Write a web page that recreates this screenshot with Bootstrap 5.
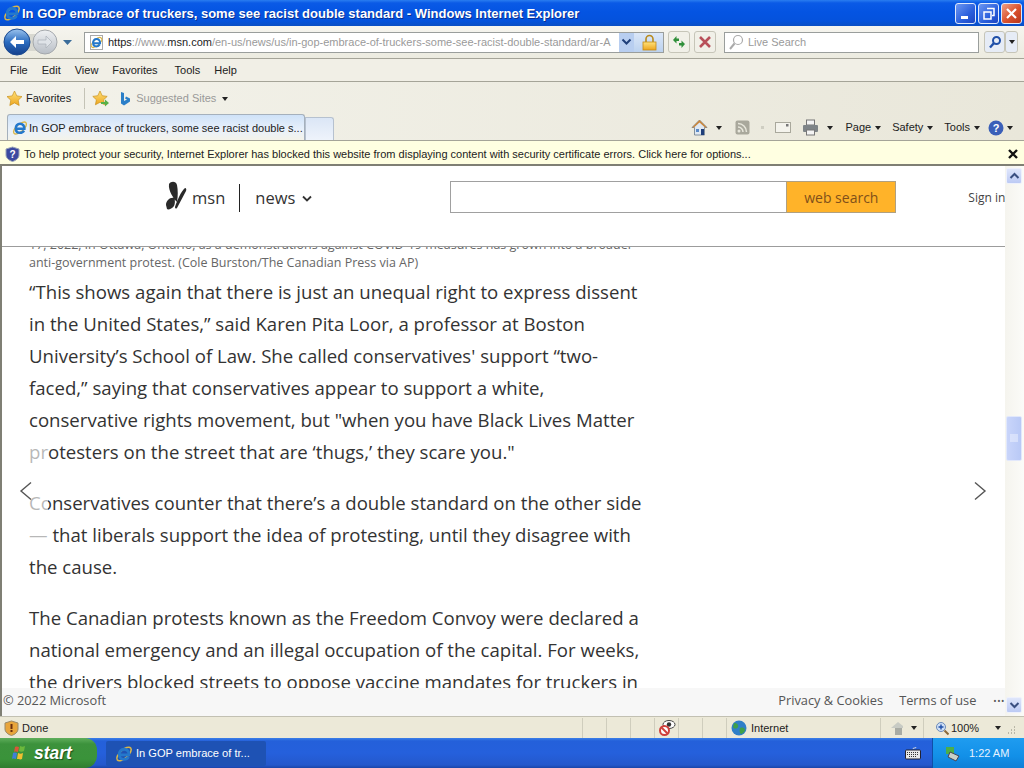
<!DOCTYPE html>
<html lang="en">
<head>
<meta charset="UTF-8">
<title>In GOP embrace of truckers, some see racist double standard - Windows Internet Explorer</title>
<link href="https://cdn.jsdelivr.net/npm/bootstrap@5.3.0/dist/css/bootstrap.min.css" rel="stylesheet">
<style>
html, body { margin: 0; height: 768px; overflow: hidden; }
body { font-family: "Liberation Sans", "Noto Sans", sans-serif; font-size: 11px; color: #222; width: 1024px; background: #ece9d8; }
body > div { flex: none; }
svg { display: block; flex: none; }
.ie-title { height: 26px; color: #fff; background: linear-gradient(#2a7df0 0, #0a5ae6 3px, #0454e2 12px, #0452dc 21px, #0a4fc4 26px); padding-left: 3px; }
.ie-title-text { font: bold 13px "Liberation Sans", sans-serif; margin-left: 1px; text-shadow: 1px 1px 0 #0a2f90; white-space: nowrap; width: 933px; flex: none; }
.ie-winbtn { width: 21px; height: 21px; margin-right: 2px; border: 1px solid #dfe9fb; border-radius: 3px; background: linear-gradient(135deg, #6c97f2, #2a5fdc 60%, #1c45c2); }
.ie-winbtn-close { background: linear-gradient(135deg, #f0a085, #d9512c 55%, #b8361a); }
.ie-addr { height: 33px; background: linear-gradient(#f6f5ef, #ecebe0); border-bottom: 1px solid #a5a498; }
.ie-urlbox { margin-left: 6px; width: 580px; height: 21px; background: #fff; border: 1px solid #9a9e9c; color: #9a9a9a; white-space: nowrap; overflow: hidden; }
.ie-url-text { width: 514px; flex: none; overflow: hidden; padding-left: 3px; }
.ie-url-text b { font-weight: 400; color: #222; }
.ie-urldrop { width: 15px; height: 100%; background: #b8cef0; flex: none; }
.ie-lock { width: 30px; height: 100%; background: linear-gradient(#dbe7f8, #bcd2ef); flex: none; }
.ie-toolbtn { width: 22px; height: 22px; border: 1px solid #c6c5b8; border-radius: 3px; background: #f1f0e8; }
.ie-search { margin-left: 8px; width: 255px; height: 21px; background: #fff; border: 1px solid #9a9e9c; color: #9a9a9a; padding-left: 3px; }
.ie-menu { height: 23px; background: #f1efe6; border-bottom: 1px solid #a5a498; padding-top: 1px; }
.ie-cmd { height: 59px; background: linear-gradient(90deg, #f3f2ea, #e9e7da); border-bottom: 1px solid #a5a498; }
.ie-favs { height: 33px; }
.ie-sep { width: 1px; height: 21px; background: #c4c3b6; }
.ie-muted { color: #999; }
.ie-caret { width: 0; height: 0; border: 3px solid transparent; border-top: 4px solid #222; border-bottom: 0; flex: none; }
.ie-tabrow { height: 25px; }
.ie-tab { width: 298px; height: 26px; margin-left: 7px; background: linear-gradient(#cfe2f8, #e9f1fb 60%, #f4f3ea); border: 1px solid #a5b0bc; border-bottom: 0; border-radius: 3px 3px 0 0; white-space: nowrap; padding: 1px 0 0 4px; align-self: flex-end; overflow: hidden; }
.ie-newtab { width: 29px; height: 23px; background: linear-gradient(#dbe6f6, #eef3fb); border: 1px solid #b6c1cf; border-bottom: 0; border-radius: 0 3px 0 0; align-self: flex-end; }
.ie-info { height: 25px; background: #ffffe1; border-bottom: 2px solid #7f7f74; padding: 3px 0 0 5px; white-space: nowrap; }
.ie-page { height: 550px; position: relative; background: #fff; border-left: 2px solid #7f7f74; }
.ie-pagemain { width: 1003px; flex: none; min-width: 0; }
.msn-head { height: 81px; border-bottom: 1px solid #9c9c9c; flex: none; padding: 15px 0 0 164px; font-family: "Open Sans", sans-serif; color: #333; white-space: nowrap; overflow: hidden; }
.msn-word { font-size: 16.5px; line-height: 34px; }
.msn-divider { width: 1px; height: 28px; background: #222; margin: 3px 15px 0 14px; flex: none; }
.msn-input { width: 336px; height: 32px; border: 1px solid #a0a0a0; border-right: 0; margin-left: 138px; background: #fff; flex: none; }
.msn-btn { width: 110px; height: 32px; background: #ffb329; border: 1px solid #b0a080; color: #80501a; font-size: 14px; flex: none; }
.msn-sign { font-size: 12px; margin-left: 72px; color: #444; line-height: 34px; }
.msn-article { flex: 1 1 auto; overflow: hidden; padding-left: 27px; white-space: nowrap; font-family: "Open Sans", sans-serif; }
.msn-caption { font-size: 12.5px; line-height: 18px; color: #666; margin: -11px 0 4px; }
.msn-para { font-size: 18.6px; line-height: 32px; color: #333; margin: 0 0 19px; }
.msn-foot { height: 28px; flex: none; background: #f7f7f7; color: #555; font-family: "Open Sans", sans-serif; font-size: 12.8px; padding: 0 0 2px 1px; }
.msn-fade { position: absolute; left: 0; top: 275px; width: 46px; height: 105px; background: rgba(255,255,255,.65); }
.msn-arrow { position: absolute; top: 315px; }
.ie-scroll { width: 19px; flex: none; background: linear-gradient(90deg, #f5f4ee, #fbfbf8); padding: 2px 2px 3px 1px; }
.ie-scrollbtn { height: 16px; background: linear-gradient(#dfe6fb, #bccaf4); border: 1px solid #eef1fc; border-radius: 2px; flex: none; }
.ie-thumb { height: 45px; margin-top: 232px; background: linear-gradient(90deg, #c9d5fa, #b9c9f6); border: 1px solid #e2e8fb; border-radius: 2px; flex: none; }
.ie-status { height: 22px; background: #ece9d8; padding: 1px 0 0 4px; border-top: 1px solid #c2c0b2; }
.ie-statcell { width: 24px; height: 100%; border-left: 1px solid #cfcdbd; flex: none; }
.ie-task { height: 30px; background: linear-gradient(#3a7fe8 0, #2460da 3px, #2560dc 50%, #2458cc 90%, #1a45a8 100%); color: #fff; }
.ie-start { width: 97px; height: 100%; background: linear-gradient(#5fae5c 0, #3c923c 20%, #3a933a 70%, #2f7d2f 100%); border-radius: 0 12px 12px 0; padding-left: 10px; font: italic bold 17.5px "Liberation Sans", sans-serif; text-shadow: 1px 1px 1px #1a4f1a; }
.ie-taskbtn { width: 160px; height: 25px; margin-left: 9px; background: #1e52b4; border-radius: 2px; font-size: 11.1px; padding: 1px 0 0 9px; white-space: nowrap; }
.ie-tray { width: 92px; height: 100%; background: linear-gradient(#1f9cf0, #1290e8 60%, #0f7fd6); border-left: 1px solid #0f4fa8; color: #e6f2ff; padding-left: 12px; }
</style>
</head>
<body class="d-flex flex-column">

<svg width="0" height="0" style="position:absolute">
  <defs>
    <linearGradient id="gBack" x1="0" y1="0" x2="0" y2="1"><stop offset="0" stop-color="#9cc4ee"/><stop offset=".5" stop-color="#2a6cc0"/><stop offset="1" stop-color="#14408c"/></linearGradient>
    <linearGradient id="gFwd" x1="0" y1="0" x2="0" y2="1"><stop offset="0" stop-color="#eef0f2"/><stop offset="1" stop-color="#b8bec6"/></linearGradient>
    <linearGradient id="gGold" x1="0" y1="0" x2="0" y2="1"><stop offset="0" stop-color="#ffe27a"/><stop offset="1" stop-color="#eda51e"/></linearGradient>
    <symbol id="ieLogo" viewBox="0 0 16 16">
      <ellipse cx="8" cy="8" rx="8" ry="3.600" transform="rotate(-42 8 8)" fill="none" stroke="#d9b64a" stroke-width="1.400"/>
      <path d="M3.800 8.800H12.400C12.600 5.600 10.600 3.800 8 3.800 5.400 3.800 3.800 5.800 3.800 8.400 3.800 11 5.500 12.800 8 12.800 9.800 12.800 11.200 12 12 10.600" fill="none" stroke="#2478cc" stroke-width="2.500"/>
    </symbol>
  </defs>
</svg>

<!-- title bar -->
<div class="ie-title d-flex align-items-center">
  <svg width="18" height="18"><use href="#ieLogo"/></svg>
  <div class="ie-title-text">In GOP embrace of truckers, some see racist double standard - Windows Internet Explorer</div>
  <div class="ie-winbtn d-flex align-items-end"><svg width="19" height="19"><rect x="5" y="12" width="7" height="3" fill="#fff"/></svg></div>
  <div class="ie-winbtn"><svg width="19" height="19"><path d="M8 4.500h7v7h-2M5 8h7v7H5z" fill="none" stroke="#fff" stroke-width="1.500"/></svg></div>
  <div class="ie-winbtn ie-winbtn-close"><svg width="19" height="19"><path d="M5 5l9 9M14 5l-9 9" stroke="#fff" stroke-width="2.200"/></svg></div>
</div>

<!-- address row -->
<div class="ie-addr d-flex align-items-center">
  <svg width="78" height="32">
    <rect x="14" y="8" width="36" height="17" rx="8" fill="#d8d8d0"/>
    <circle cx="17" cy="16" r="13" fill="url(#gBack)" stroke="#1b4a90"/>
    <path d="M10 16l6-6v4h8v4h-8v4z" fill="#fff"/>
    <circle cx="45" cy="16" r="12" fill="url(#gFwd)" stroke="#a4a8ac"/>
    <path d="M52 16l-6-6v4h-8v4h8v4z" fill="#dfe3e8" stroke="#aab0b8" stroke-width=".7"/>
    <path d="M63 14h9l-4.500 5z" fill="#3a6c9a"/>
  </svg>
  <div class="ie-urlbox d-flex align-items-center">
    <svg width="17" height="17" style="margin-left:3px"><rect x="2.500" y="1.500" width="12" height="14" fill="#fff" stroke="#aaa"/><use href="#ieLogo" x="2" y="2" width="13" height="13"/></svg>
    <div class="ie-url-text"><b>https</b>://www.<b>msn.com</b>/en-us/news/us/in-gop-embrace-of-truckers-some-see-racist-double-standard/ar-A</div>
    <div class="ie-urldrop d-flex align-items-center justify-content-center"><svg width="11" height="8"><path d="M1.500 1.500l4 4 4-4" fill="none" stroke="#1f3f7a" stroke-width="2"/></svg></div>
    <div class="ie-lock d-flex align-items-center justify-content-center"><svg width="15" height="17"><path d="M4 8V5a3.500 3.500 0 0 1 7 0v3" fill="none" stroke="#b88a1c" stroke-width="1.600"/><rect x="1" y="8" width="13" height="8" fill="url(#gGold)" stroke="#c48a18" stroke-width=".8"/></svg></div>
  </div>
  <div class="ie-toolbtn ms-1 d-flex align-items-center justify-content-center"><svg width="16" height="16"><path d="M2 6l3.500-4v2.500H8V7H5.500v2.500z" fill="#2f8f3a"/><path d="M14 10l-3.500 4v-2.500H8V9h2.500V6.500z" fill="#2f8f3a"/></svg></div>
  <div class="ie-toolbtn ms-1 d-flex align-items-center justify-content-center"><svg width="14" height="14"><path d="M2 2l10 10M12 2L2 12" stroke="#b8505a" stroke-width="2.600"/></svg></div>
  <div class="ie-search d-flex align-items-center gap-1">
    <svg width="16" height="18"><circle cx="10" cy="7" r="4.500" fill="#fff" stroke="#aaa" stroke-width="1.200"/><path d="M6.500 10.500L2 16" stroke="#aaa" stroke-width="2"/></svg>
    <span>Live Search</span>
  </div>
  <div class="ie-toolbtn d-flex align-items-center justify-content-center" style="margin-left:5px;width:21px;background:#e6ecf6"><svg width="14" height="14"><circle cx="8.500" cy="5.500" r="3.500" fill="none" stroke="#1f4fa8" stroke-width="2"/><path d="M6 8l-4 4.500" stroke="#1f4fa8" stroke-width="2.400"/></svg></div>
  <div class="ie-toolbtn d-flex align-items-center justify-content-center" style="width:13px;background:#e6ecf6"><span class="ie-caret"></span></div>
</div>

<!-- menu -->
<div class="ie-menu d-flex align-items-center">
  <span style="margin-left:10px">File</span>
  <span style="margin-left:14px">Edit</span>
  <span style="margin-left:14px">View</span>
  <span style="margin-left:14px">Favorites</span>
  <span style="margin-left:17px">Tools</span>
  <span style="margin-left:14px">Help</span>
</div>

<!-- favorites and tab row -->
<div class="ie-cmd d-flex flex-column">
  <div class="ie-favs d-flex align-items-center">
    <svg width="17" height="17" style="margin-left:6px"><path d="M8.500 1l2.300 4.900 5.200.7-3.800 3.600 1 5.300-4.700-2.600-4.700 2.600 1-5.300L1 6.600l5.200-.7z" fill="url(#gGold)" stroke="#c8901c" stroke-width=".7"/></svg>
    <span style="margin-left:3px">Favorites</span>
    <span class="ie-sep" style="margin-left:13px"></span>
    <svg width="18" height="17" style="margin-left:7px"><path d="M8 1l2.200 4.700 5 .7-3.600 3.400 1 5-4.600-2.500-4.600 2.500 1-5L.800 6.400l5-.7z" fill="url(#gGold)" stroke="#c8901c" stroke-width=".7"/><path d="M9 12h4v-2.500l4 3.500-4 3.500V14H9z" fill="#58b048"/></svg>
    <svg width="12" height="16" style="margin-left:9px"><path d="M2 1l3 1v8l3-1.500-2-1 1-2 4 2v3l-6 4-3-2z" fill="#2b7fc8"/></svg>
    <span class="ie-muted" style="margin-left:5px">Suggested Sites</span>
    <span class="ie-caret" style="margin-left:6px"></span>
  </div>
  <div class="ie-tabrow d-flex">
    <div class="ie-tab d-flex align-items-center">
      <svg width="16" height="16"><use href="#ieLogo"/></svg>
      <span style="margin-left:1px">In GOP embrace of truckers, some see racist double s...</span>
    </div>
    <div class="ie-newtab"></div>
    <div class="d-flex align-items-center ms-auto" style="padding-right:11px;height:25px">
      <svg width="17" height="17"><path d="M8.500 1L1 8.500h2.500V16h10V8.500H16z" fill="#dfe8f2" stroke="#6a7a8a" stroke-width=".8"/><path d="M8.500 1L1 8.500h2L8.500 3.500 14 8.500h2z" fill="#c8863c"/><rect x="10" y="10" width="3" height="6" fill="#1f3f7a"/><rect x="5" y="10" width="3" height="3" fill="#5a8ac8"/></svg>
      <span class="ie-caret" style="margin-left:8px"></span>
      <svg width="15" height="15" style="margin-left:13px"><rect width="14" height="14" x=".5" y=".5" rx="2" fill="#a9a89c"/><circle cx="4" cy="11" r="1.500" fill="#e8e7dc"/><path d="M3 7a5 5 0 0 1 5 5M3 3.500A8.500 8.500 0 0 1 11.500 12" fill="none" stroke="#e8e7dc" stroke-width="1.500"/></svg>
      <span style="margin-left:11px;width:3px;height:3px;background:#cfcec2"></span>
      <svg width="16" height="11" style="margin-left:11px"><rect x=".5" y=".5" width="15" height="10" fill="#f4f3ec" stroke="#a9a89c"/><rect x="11" y="2" width="2.500" height="2.500" fill="#777"/></svg>
      <svg width="17" height="17" style="margin-left:11px"><rect x="4.500" y="1" width="8" height="5" fill="#f4f4f4" stroke="#777"/><rect x="1" y="6" width="15" height="7" rx="1" fill="#7e8488"/><rect x="4.500" y="11" width="8" height="5" fill="#f4f4f4" stroke="#777"/></svg>
      <span class="ie-caret" style="margin-left:8px"></span>
      <span style="margin-left:12px">Page</span><span class="ie-caret ms-1"></span>
      <span style="margin-left:11px">Safety</span><span class="ie-caret ms-1"></span>
      <span style="margin-left:11px">Tools</span><span class="ie-caret ms-1"></span>
      <svg width="16" height="16" style="margin-left:8px"><circle cx="8" cy="8" r="7.500" fill="#3a5fb8"/><text x="8" y="12" text-anchor="middle" fill="#fff" font-family="Liberation Sans" font-weight="700" font-size="11">?</text></svg>
      <span class="ie-caret" style="margin-left:3px"></span>
    </div>
  </div>
</div>

<!-- information bar -->
<div class="ie-info d-flex align-items-center">
  <svg width="15" height="16"><path d="M7.500 1L14 3v6c0 3-3 5.500-6.500 6.500C4 14.500 1 12 1 9V3z" fill="#3c4aa0" stroke="#9aa4b8"/><text x="7.500" y="12" text-anchor="middle" fill="#fff" font-family="Liberation Sans" font-weight="700" font-size="10">?</text></svg>
  <span style="margin-left:4px">To help protect your security, Internet Explorer has blocked this website from displaying content with security certificate errors. Click here for options...</span>
  <svg width="10" height="10" class="ms-auto" style="margin-right:6px"><path d="M1 1l8 8M9 1L1 9" stroke="#111" stroke-width="2.400"/></svg>
</div>

<!-- page -->
<div class="ie-page d-flex">
  <div class="ie-pagemain d-flex flex-column">
    <div class="msn-head d-flex align-items-start">
      <svg width="22" height="30"><path d="M3 3C5 0 10 0 11 4 12 9 12 15 11 21 8 18 2 10 3 3zM19 7C20.500 7 20.500 9 20 10L11 27C10 28 9 27.500 9 26 11 20 15 10 19 7zM0 24C0 20 4 16 8 17 9.500 19 9 23 8 25 6 28 2 29 1 28z" fill="#2a2a2a"/></svg>
      <span class="msn-word" style="margin-left:4px">msn</span>
      <span class="msn-divider"></span>
      <span class="msn-word">news</span>
      <svg width="10" height="8" style="margin:14px 0 0 7px"><path d="M1 1.500l4 4 4-4" fill="none" stroke="#333" stroke-width="1.800"/></svg>
      <div class="msn-input"></div>
      <div class="msn-btn d-flex align-items-center justify-content-center">web search</div>
      <span class="msn-sign">Sign in</span>
    </div>
    <div class="msn-article">
      <p class="msn-caption">17, 2022, in Ottawa, Ontario, as a demonstrations against COVID-19 measures has grown into a broader<br>anti-government protest. (Cole Burston/The Canadian Press via AP)</p>
      <p class="msn-para">“This shows again that there is just an unequal right to express dissent<br>in the United States,” said Karen Pita Loor, a professor at Boston<br>University’s School of Law. She called conservatives' support “two-<br>faced,” saying that conservatives appear to support a white,<br>conservative rights movement, but "when you have Black Lives Matter<br>protesters on the street that are ‘thugs,’ they scare you."</p>
      <p class="msn-para">Conservatives counter that there’s a double standard on the other side<br>— that liberals support the idea of protesting, until they disagree with<br>the cause.</p>
      <p class="msn-para">The Canadian protests known as the Freedom Convoy were declared a<br>national emergency and an illegal occupation of the capital. For weeks,<br>the drivers blocked streets to oppose vaccine mandates for truckers in</p>
    </div>
    <div class="msn-foot d-flex align-items-center">
      <span>© 2022 Microsoft</span>
      <span class="ms-auto">Privacy &amp; Cookies</span>
      <span style="margin-left:16px">Terms of use</span>
      <span style="margin-left:17px;font-size:9px;letter-spacing:.5px">•••</span>
    </div>
  </div>
  <div class="msn-fade"></div>
  <svg class="msn-arrow" style="left:17px" width="14" height="20"><path d="M12 1.500L2 10l10 8.500" fill="none" stroke="#555" stroke-width="1.400"/></svg>
  <svg class="msn-arrow" style="left:971px" width="14" height="20"><path d="M2 1.500L12 10 2 18.500" fill="none" stroke="#555" stroke-width="1.400"/></svg>
  <div class="ie-scroll d-flex flex-column">
    <div class="ie-scrollbtn d-flex align-items-center justify-content-center"><svg width="11" height="8"><path d="M1.500 6l4-4 4 4" fill="none" stroke="#3a4f80" stroke-width="2"/></svg></div>
    <div class="ie-thumb d-flex align-items-center justify-content-center"><svg width="8" height="9"><path d="M0 1h8M0 3h8M0 5h8M0 7h8" stroke="#eef2fe"/></svg></div>
    <div class="ie-scrollbtn d-flex align-items-center justify-content-center mt-auto"><svg width="11" height="8"><path d="M1.500 2l4 4 4-4" fill="none" stroke="#3a4f80" stroke-width="2"/></svg></div>
  </div>
</div>

<!-- status bar -->
<div class="ie-status d-flex align-items-center">
  <svg width="15" height="16"><path d="M7.500 1L14 3v6c0 3-3 5.500-6.500 6.500C4 14.500 1 12 1 9V3z" fill="#e8a53c" stroke="#9a8a6a"/><rect x="6.500" y="4" width="2" height="5" fill="#6a2f10"/><rect x="6.500" y="10" width="2" height="2" fill="#6a2f10"/></svg>
  <span style="margin-left:3px;width:560px;flex:none">Done</span>
  <div class="ie-statcell"></div>
  <div class="ie-statcell"></div>
  <div class="ie-statcell"></div>
  <div class="ie-statcell d-flex align-items-center justify-content-center"><svg width="18" height="18"><ellipse cx="11" cy="5.500" rx="6" ry="4" fill="#fff" stroke="#444"/><circle cx="11" cy="5.500" r="2.200" fill="#333"/><circle cx="6.500" cy="11.500" r="4.500" fill="#fff" stroke="#d0403c" stroke-width="2"/><path d="M3.500 8.500l6 6" stroke="#d0403c" stroke-width="2"/></svg></div>
  <div class="ie-statcell"></div>
  <div class="ie-statcell"></div>
  <div class="ie-statcell d-flex align-items-center" style="width:154px;padding-left:4px">
    <svg width="16" height="16"><circle cx="8" cy="8" r="7.500" fill="#2f7fc8"/><path d="M3 3c3 0 5 2 4 4S3 9 2 7zM9 8c3-1 5 0 5 2s-3 4-4 4-2-4-1-6z" fill="#3fa04a"/></svg>
    <span style="margin-left:4px">Internet</span>
  </div>
  <div class="ie-statcell d-flex align-items-center" style="width:43px;padding-left:9px">
    <svg width="16" height="16"><path d="M1 8l7-6 5 4v2z" fill="#c8cbc4"/><rect x="5" y="8" width="7" height="7" fill="#a8aba4"/></svg>
    <span class="ie-caret" style="margin-left:5px"></span>
  </div>
  <div class="ie-statcell d-flex align-items-center" style="width:79px;padding-left:11px">
    <svg width="14" height="15"><circle cx="6" cy="6" r="4.500" fill="#cfe0f6" stroke="#6a8ab8"/><path d="M3.500 6h5M6 3.500v5" stroke="#1f4fa8" stroke-width="1.400"/><path d="M9.500 9.500l4 4" stroke="#8a6a3a" stroke-width="2"/></svg>
    <span style="margin-left:2px">100%</span>
    <span class="ie-caret" style="margin-left:16px"></span>
  </div>
  <svg width="10" height="10" style="margin:6px 2px 0 4px"><path d="M8 1h1M5 4h1M8 4h1M2 7h1M5 7h1M8 7h1" stroke="#a8a696" stroke-width="1.500"/></svg>
</div>

<!-- taskbar -->
<div class="ie-task d-flex align-items-center">
  <div class="ie-start d-flex align-items-center">
    <svg width="20" height="20"><path d="M5 4c2-1 3 0 4 0L8 9c-1 0-2-1-4 0z" fill="#d8573a"/><path d="M10 3c2 1 3 1 5 0l-1 5c-2 1-3 1-5 0z" fill="#6cb83c"/><path d="M3 10c2-1 3 0 4 0l-1 6c-1 0-2-1-4 0z" fill="#3f7fd8"/><path d="M8 10c2 1 3 1 5 0l-1 6c-2 1-3 0-5 0z" fill="#f0c030"/></svg>
    <span style="margin-left:4px">start</span>
  </div>
  <div class="ie-taskbtn d-flex align-items-center">
    <svg width="18" height="18"><use href="#ieLogo"/></svg>
    <span style="margin-left:3px">In GOP embrace of tr...</span>
  </div>
  <svg width="16" height="14" class="ms-auto" style="margin-right:11px"><path d="M8 3c0-2 3 0 3-2" fill="none" stroke="#ddd"/><rect x=".5" y="4" width="15" height="9" rx="1" fill="#e8e8e8" stroke="#223"/><path d="M2 6.500h12M2 8.500h12M4 10.500h8" stroke="#333" stroke-dasharray="1 1"/></svg>
  <div class="ie-tray d-flex align-items-center">
    <svg width="16" height="17"><path d="M1 2h8v7H1z" fill="#4cae48"/><path d="M5 7l9 4-3 5-8-4z" fill="#c8d0c8" stroke="#445"/></svg>
    <span style="margin-left:8px">1:22 AM</span>
  </div>
</div>

<script src="https://cdn.jsdelivr.net/npm/bootstrap@5.3.0/dist/js/bootstrap.bundle.min.js"></script>
</body>
</html>
